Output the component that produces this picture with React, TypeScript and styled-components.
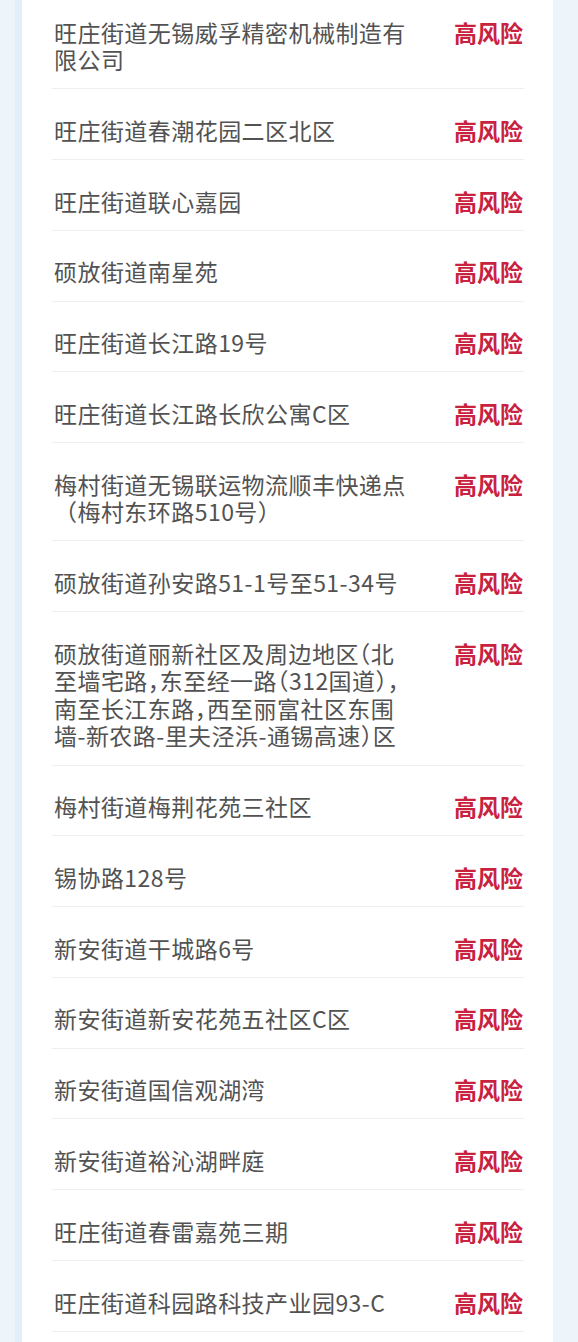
import React from "react";
import styled, { createGlobalStyle } from "styled-components";

const Global = createGlobalStyle`
  html, body {
    margin: 0;
    padding: 0;
    background: #eaf3fb;
    overflow: hidden;
  }
  body {
    font-family: "Noto Sans CJK SC", "Noto Sans", sans-serif;
  }
`;

const Page = styled.div`
  height: 1342px;
  overflow: hidden;
  padding: 0 25px 0 15px;
  background: #edf5fb;
`;

const Card = styled.div`
  display: flow-root;
  margin-left: 7px;
  background: #ffffff;
  box-shadow: -7px 0 0 #e2eef9;
  height: 100%;
  padding: 0 29px 0 30px;
  box-sizing: border-box;
`;

const List = styled.ul`
  list-style: none;
  margin: -9px 0 0 0;
  padding: 0;
`;

const Row = styled.li`
  display: flex;
  align-items: flex-start;
  justify-content: space-between;
  padding: 27.6px 0 14.7px 2px;
  border-bottom: 1px solid #efefef;
  line-height: 27.5px;
  font-size: 23px;
`;

const Place = styled.span<{ $halt?: boolean }>`
  width: 362px;
  color: #525252;
  letter-spacing: 0.45px;
  word-break: break-all;
  white-space: pre-line;
  font-feature-settings: ${(p) => (p.$halt ? '"halt"' : "normal")};
`;

const Risk = styled.span`
  flex: none;
  color: #c9223f;
  font-weight: 700;
  margin-right: 1px;
`;

const items: { text: string; halt?: boolean }[] = [
  { text: "旺庄街道无锡威孚精密机械制造有限公司" },
  { text: "旺庄街道春潮花园二区北区" },
  { text: "旺庄街道联心嘉园" },
  { text: "硕放街道南星苑" },
  { text: "旺庄街道长江路19号" },
  { text: "旺庄街道长江路长欣公寓C区" },
  { text: "梅村街道无锡联运物流顺丰快递点（梅村东环路510号）" },
  { text: "硕放街道孙安路51-1号至51-34号" },
  {
    text:
      "硕放街道丽新社区及周边地区（北\n至墙宅路，东至经一路（312国道），\n南至长江东路，西至丽富社区东围\n墙-新农路-里夫泾浜-通锡高速）区",
    halt: true,
  },
  { text: "梅村街道梅荆花苑三社区" },
  { text: "锡协路128号" },
  { text: "新安街道干城路6号" },
  { text: "新安街道新安花苑五社区C区" },
  { text: "新安街道国信观湖湾" },
  { text: "新安街道裕沁湖畔庭" },
  { text: "旺庄街道春雷嘉苑三期" },
  { text: "旺庄街道科园路科技产业园93-C" },
];

export default function App() {
  return (
    <>
      <Global />
      <Page>
        <Card>
          <List>
            {items.map((it) => (
              <Row key={it.text}>
                <Place $halt={it.halt}>{it.text}</Place>
                <Risk>高风险</Risk>
              </Row>
            ))}
          </List>
        </Card>
      </Page>
    </>
  );
}
